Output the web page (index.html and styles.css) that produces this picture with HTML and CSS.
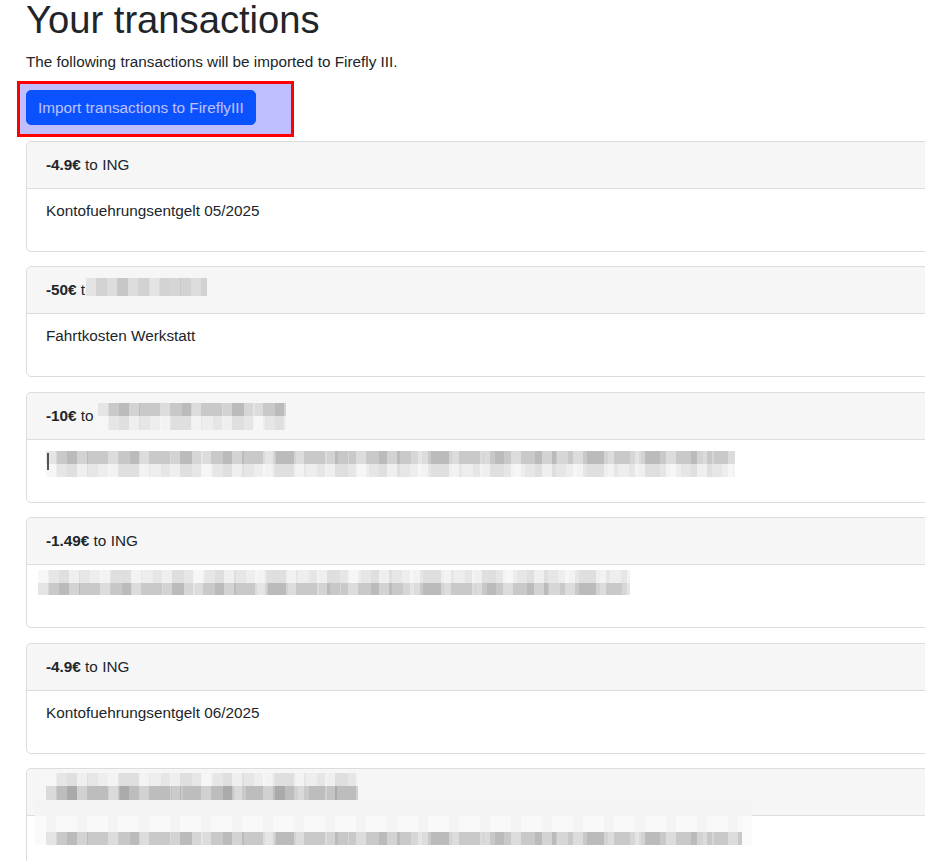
FILE: index.html
```html
<!DOCTYPE html>
<html lang="en">
<head>
<meta charset="utf-8">
<title>Your transactions</title>
<link rel="stylesheet" href="styles.css">
</head>
<body>
<main class="page">
  <h1 class="title">Your transactions</h1>
  <p class="lead">The following transactions will be imported to Firefly III.</p>
  <div class="highlight">
    <button class="btn" type="button">Import transactions to FireflyIII</button>
  </div>

  <section class="list">
    <article class="card">
      <div class="card-header"><strong>-4.9€</strong> to ING</div>
      <div class="card-body">Kontofuehrungsentgelt 05/2025</div>
    </article>

    <article class="card">
      <div class="card-header"><strong>-50€</strong> t<span class="mosaic m-c2h"><span class="mrow single"></span></span></div>
      <div class="card-body">Fahrtkosten Werkstatt</div>
    </article>

    <article class="card">
      <div class="card-header"><strong>-10€</strong> to <span class="mosaic m-c3h"><span class="mrow dark"></span><span class="mrow light"></span></span></div>
      <div class="card-body">
        <div class="mosaic-block m-c3b"><span class="cursor"></span><span class="mrow dark"></span><span class="mrow light"></span></div>
      </div>
    </article>

    <article class="card">
      <div class="card-header"><strong>-1.49€</strong> to ING</div>
      <div class="card-body">
        <div class="mosaic-block m-c4b"><span class="mrow light"></span><span class="mrow dark"></span></div>
      </div>
    </article>

    <article class="card">
      <div class="card-header"><strong>-4.9€</strong> to ING</div>
      <div class="card-body">Kontofuehrungsentgelt 06/2025</div>
    </article>

    <article class="card">
      <div class="card-header">
        <div class="mosaic-block m-c6h"><span class="mrow light"></span><span class="mrow darker"></span></div>
      </div>
      <div class="card-body">
        <div class="mosaic-block m-c6b"><span class="mrow fade"></span><span class="mrow dark"></span></div>
      </div>
    </article>
  </section>
</main>
</body>
</html>
```

FILE: styles.css
```css
html, body {
  margin: 0;
  padding: 0;
  overflow: hidden;
  background: #ffffff;
}

body {
  font-family: "Liberation Sans", Arial, sans-serif;
  font-size: 15.3px;
  line-height: 23px;
  color: #212529;
}

.page {
  height: 861px;
  overflow: hidden;
  padding-left: 26px;
}

.title {
  margin: 0;
  font-size: 38.2px;
  line-height: 40px;
  font-weight: 400;
  color: #212529;
}

.lead {
  margin: 10px 0 8px;
}

.highlight {
  position: relative;
  display: flex;
  width: fit-content;
  margin-left: -9px;
  padding: 6px 35px 9px 6px;
  border: 3px solid #ff0000;
  background: #ffffff;
}

.highlight::after {
  content: "";
  position: absolute;
  inset: 0;
  background: rgba(0, 0, 255, 0.25);
  pointer-events: none;
}

.btn {
  font-family: "Liberation Sans", Arial, sans-serif;
  font-size: 15.3px;
  line-height: 23px;
  padding: 5px 11px;
  border: 1px solid #0d6efd;
  border-radius: 5px;
  background: #0d6efd;
  color: #ffffff;
}

.list {
  margin-top: 4px;
  margin-right: -60px;
}

.card {
  border: 1px solid #dcdcdc;
  border-radius: 5px;
  margin-bottom: 14.4px;
  background: #ffffff;
}

.card-header {
  background: #f6f6f6;
  border-bottom: 1px solid #dcdcdc;
  border-radius: 5px 5px 0 0;
  padding: 11px 19px 12px;
  height: 23px;
}

.card-header strong {
  font-weight: 700;
}

.card-body {
  padding: 10px 19px 29px;
  height: 23px;
}

/* pixelated (redacted) content */
.mosaic {
  display: inline-block;
  vertical-align: top;
}

.mosaic-block {
  position: relative;
  display: flex;
  flex-direction: column;
}

.mrow {
  display: block;
  flex: 1;
}

.mosaic .mrow {
  height: 50%;
}

.mrow.single {
  height: 100%;
  background-color: #d2d2d2;
  background-image:
    repeating-linear-gradient(90deg, rgba(255,255,255,.25) 0 10px, transparent 10px 21px),
    repeating-linear-gradient(90deg, transparent 0 31px, rgba(0,0,0,.05) 31px 42px, transparent 42px 53px),
    repeating-linear-gradient(90deg, rgba(255,255,255,.2) 0 10px, transparent 10px 64px);
}

.mrow.dark {
  background-color: #c9c9c9;
  background-image:
    repeating-linear-gradient(90deg, rgba(255,255,255,.35) 0 10px, transparent 10px 31px),
    repeating-linear-gradient(90deg, transparent 0 21px, rgba(0,0,0,.07) 21px 42px, transparent 42px 52px),
    repeating-linear-gradient(90deg, rgba(255,255,255,.25) 0 11px, transparent 11px 73px);
}

.mrow.darker {
  background-color: #bdbdbd;
  background-image:
    repeating-linear-gradient(90deg, rgba(255,255,255,.3) 0 10px, transparent 10px 31px),
    repeating-linear-gradient(90deg, transparent 0 21px, rgba(0,0,0,.1) 21px 31px, transparent 31px 52px),
    repeating-linear-gradient(90deg, rgba(255,255,255,.2) 0 11px, transparent 11px 63px);
}

.mrow.light {
  background-color: #e6e6e6;
  background-image:
    repeating-linear-gradient(90deg, rgba(255,255,255,.5) 0 10px, transparent 10px 31px),
    repeating-linear-gradient(90deg, transparent 0 21px, rgba(0,0,0,.03) 21px 42px, transparent 42px 52px),
    repeating-linear-gradient(90deg, rgba(255,255,255,.3) 0 11px, transparent 11px 52px);
}

.mrow.fade {
  background-color: #f9f9f9;
  background-image:
    repeating-linear-gradient(90deg, rgba(0,0,0,.02) 0 10px, transparent 10px 31px);
}

.m-c2h {
  width: 121px;
  height: 18px;
  margin: 0 0 -2px 1px;
}

.m-c3h {
  width: 188px;
  height: 27px;
  margin: -1px 0 -3px 0;
}

.m-c3b {
  width: 689px;
  height: 26px;
  margin: 1px 0 -4px 0;
}

.cursor {
  position: absolute;
  left: 1px;
  top: 2px;
  width: 2px;
  height: 17px;
  background: #555555;
}

.m-c4b {
  width: 592px;
  height: 25px;
  margin: -5px 0 3px -8px;
}

.m-c6h {
  width: 312px;
  height: 27px;
  margin: -7px 0 3px 0;
}

.m-c6b {
  width: 696px;
  height: 29px;
  padding: 16px 10px 0 11px;
  margin: -26px 0 4px -11px;
  background: linear-gradient(#f4f4f4 0 16px, #fafafa 16px);
}

.m-c6b .mrow.fade {
  flex: 0 0 16px;
}

.m-c6b .mrow.dark {
  flex: 0 0 13px;
}
```
